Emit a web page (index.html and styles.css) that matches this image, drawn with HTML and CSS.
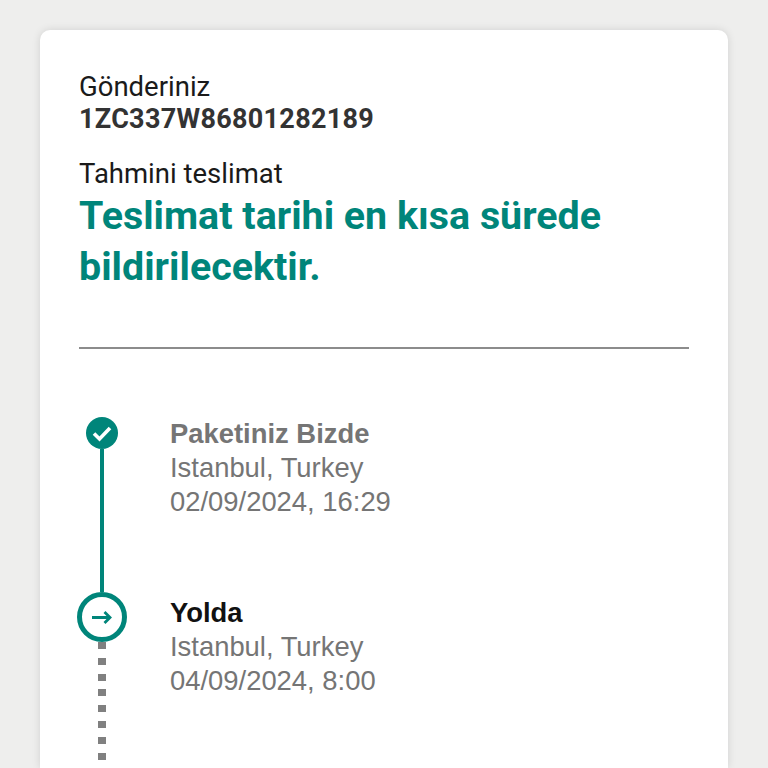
FILE: index.html
```html
<!DOCTYPE html>
<html lang="en">
<head>
  <meta charset="UTF-8">
  <title>Gönderi Takip</title>
  <link rel="stylesheet" href="styles.css">
</head>
<body>

  <div class="card">
    <!-- Shipment summary -->
    <p class="label">Gönderiniz</p>
    <p class="tracking">1ZC337W86801282189</p>
    <p class="label eta-label">Tahmini teslimat</p>
    <h2 class="eta">Teslimat tarihi en kısa sürede bildirilecektir.</h2>

    <hr class="divider">

    <!-- Tracking steps -->
    <div class="timeline">
      <div class="step step-done">
        <div class="marker">
          <svg class="icon-done" viewBox="0 0 32 32" width="32" height="32">
            <circle cx="16" cy="16" r="16" fill="#00857a"/>
            <path d="M8 16.5l5.5 5.5 10.5-11" fill="none" stroke="#fff" stroke-width="3.6"/>
          </svg>
          <div class="line"></div>
        </div>
        <div class="info">
          <div class="title">Paketiniz Bizde</div>
          <div>Istanbul, Turkey</div>
          <div>02/09/2024, 16:29</div>
        </div>
      </div>

      <div class="step step-current">
        <div class="marker">
          <svg class="icon-current" viewBox="0 0 50 50" width="50" height="50">
            <circle cx="25" cy="25" r="22.5" fill="#fff" stroke="#00857a" stroke-width="5"/>
            <path d="M15 25.5h18M27.5 20l5.5 5.5-5.5 5.5" fill="none" stroke="#00857a" stroke-width="2.8"/>
          </svg>
          <div class="dots"></div>
        </div>
        <div class="info">
          <div class="title">Yolda</div>
          <div>Istanbul, Turkey</div>
          <div>04/09/2024, 8:00</div>
        </div>
      </div>
    </div>
  </div>

</body>
</html>
```

FILE: styles.css
```css
html, body {
  height: 100%;
}

body {
  background-color: #eeeeed;
  font-family: Roboto, Arial, sans-serif;
  margin: 0;
  padding: 30px 40px 0;
  box-sizing: border-box;
  overflow: hidden;
}

p, h2 {
  margin: 0;
}

.card {
  background-color: white;
  border-radius: 10px 10px 0 0;
  box-shadow: 0 0 8px rgba(0, 0, 0, 0.12);
  padding: 40px 39px 0;
  height: 738px;
  box-sizing: border-box;
  overflow: hidden;
}

.label {
  color: #1a1a1a;
  font-size: 27.5px;
  line-height: 33px;
}

.tracking {
  color: #333;
  font-size: 27px;
  font-weight: 700;
  line-height: 33px;
  letter-spacing: 0.3px;
}

.eta-label {
  margin-top: 21px;
}

.eta {
  color: #00857a;
  font-size: 39.4px;
  font-weight: 700;
  line-height: 51px;
}

.divider {
  border: none;
  border-top: 2px solid #8c8c8c;
  margin: 55px 0 68px;
}

.step {
  display: flex;
}

.marker {
  width: 50px;
  margin-left: -2px;
  display: flex;
  flex-direction: column;
  align-items: center;
  flex-shrink: 0;
}

.marker svg {
  display: block;
  flex-shrink: 0;
}

.step-done {
  height: 175px;
}

.line {
  width: 4px;
  flex: 1;
  background-color: #00857a;
}

.dots {
  width: 8px;
  height: 130px;
  background: repeating-linear-gradient(#808080 0 7px, transparent 7px 15.8px);
}

.info {
  margin-left: 43px;
  color: #757575;
  font-family: "Liberation Sans", Arial, sans-serif;
  font-size: 27.4px;
  line-height: 34px;
}

.step-current .info {
  margin-top: 4px;
}

.title {
  font-weight: 700;
}

.step-current .title {
  color: #111;
}
```
